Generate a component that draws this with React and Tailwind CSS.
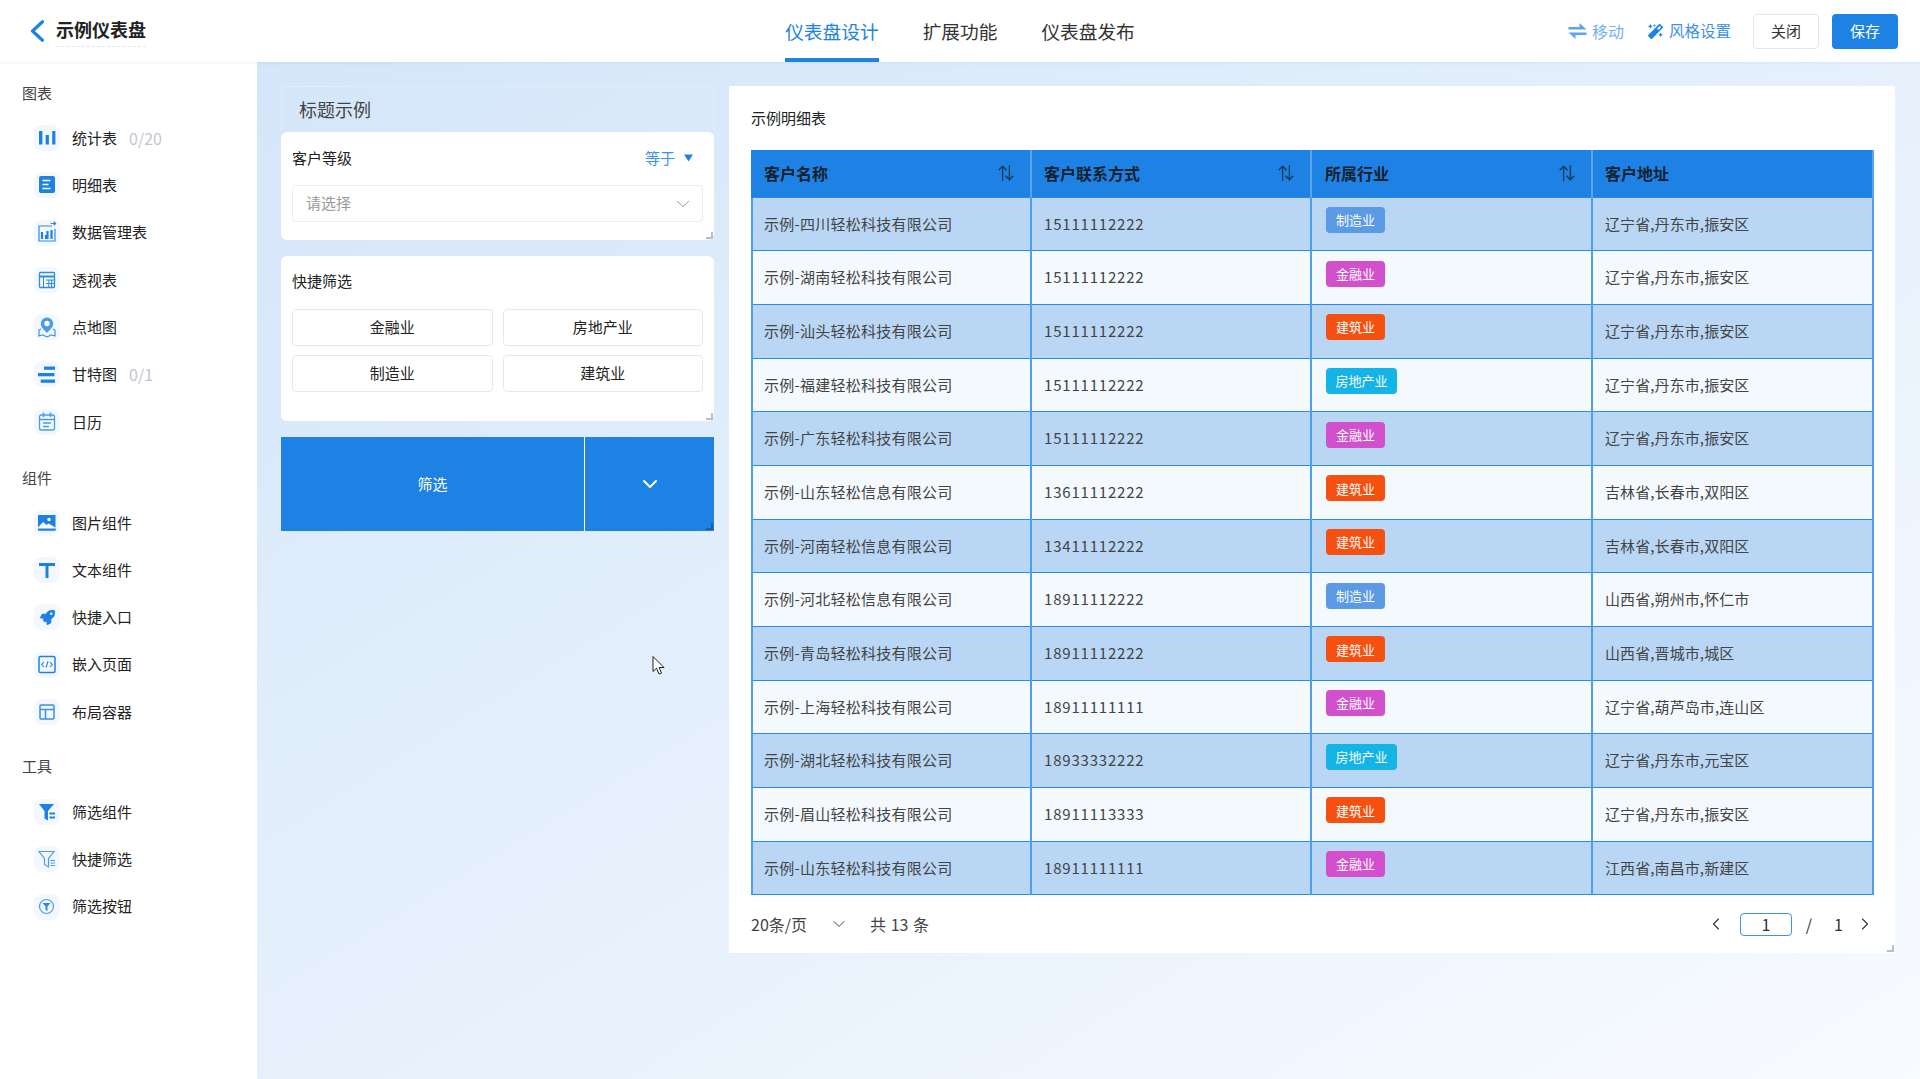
import { FaRocket, FaMagic } from 'react-icons/fa'
import { ChevronDown, ChevronLeft, ChevronRight } from 'lucide-react'

const FONT = { fontFamily: '"Noto Sans CJK SC", "Noto Sans", sans-serif' }

// sidebar icons, all on a 26 box
const icons = {
  bars: (
    <svg viewBox="0 0 26 26" className="w-[26px] h-[26px]" fill="#1e82e4">
      <rect x="5" y="6" width="3.4" height="13.5" />
      <rect x="11.6" y="10" width="3.3" height="9.5" />
      <rect x="18.2" y="6" width="3.2" height="13.5" />
    </svg>
  ),
  detail: (
    <svg viewBox="0 0 26 26" className="w-[26px] h-[26px]">
      <rect x="5" y="4" width="16" height="17" rx="2" fill="#1e82e4" />
      <path d="M8.5 8.5h8M8.5 12.5h6M8.5 16.5h8" stroke="#fff" strokeWidth="1.4" />
    </svg>
  ),
  manage: (
    <svg viewBox="0 0 26 26" className="w-[26px] h-[26px]" fill="none" stroke="#2f8ae6" strokeWidth="1.2">
      <path d="M18 6H5v15h16V9" />
      <path d="M16.5 3.5H21.5M19.8 1.8l1.8 1.7-1.8 1.7" />
      <path d="M8 12v7M12 15v4M13.5 11v8M17.5 10v9" strokeWidth="2.2" stroke="#1e82e4" />
    </svg>
  ),
  pivot: (
    <svg viewBox="0 0 26 26" className="w-[26px] h-[26px]" fill="none" stroke="#2f8ae6" strokeWidth="1.3">
      <rect x="5.5" y="5.5" width="15" height="15" rx="1" />
      <path d="M5.5 9.5h15" strokeWidth="2" />
      <path d="M9.5 9.5v11M12 13h8.5M12 16.5h8.5M14.8 13v7.5M17.6 13v7.5" strokeWidth="1" />
    </svg>
  ),
  map: (
    <svg viewBox="0 0 26 26" className="w-[26px] h-[26px]" fill="none" stroke="#2f8ae6">
      <path d="M13 3.5a6.2 6.2 0 0 0-6.2 6.2c0 3.6 3.4 6.4 6.2 9 2.8-2.6 6.2-5.4 6.2-9A6.2 6.2 0 0 0 13 3.5Z" fill="#4a9bea" stroke="none" />
      <circle cx="13" cy="9.5" r="2.7" fill="#fff" stroke="none" />
      <path d="M7 15l-2 1v6l3.5-1.2L13 23l4.5-2.2L21 22v-6l-2-1" strokeWidth="1.1" />
    </svg>
  ),
  gantt: (
    <svg viewBox="0 0 26 26" className="w-[26px] h-[26px]" fill="#1e82e4">
      <rect x="10" y="5.5" width="11" height="3.3" />
      <rect x="4" y="12" width="16.5" height="3.3" />
      <rect x="6.7" y="18.5" width="14.3" height="3.3" />
    </svg>
  ),
  calendar: (
    <svg viewBox="0 0 26 26" className="w-[26px] h-[26px]" fill="none" stroke="#4a9bea" strokeWidth="1.3">
      <rect x="5.5" y="6" width="15" height="15" rx="2" />
      <path d="M9.5 3.5v4.5M16.5 3.5v4.5" strokeWidth="1.6" />
      <path d="M5.5 10.5h15M9 14h8M9 17.5h6" />
    </svg>
  ),
  image: (
    <svg viewBox="0 0 26 26" className="w-[26px] h-[26px]">
      <rect x="4" y="5" width="17.5" height="15.5" fill="#1e82e4" />
      <circle cx="15" cy="9.5" r="1.7" fill="#fff" />
      <path d="M4 17.5l5-5.5 3.5 3 2-1.5 7 4v1.5H4Z" fill="#fff" />
      <rect x="4" y="18.5" width="17.5" height="2" fill="#1e82e4" />
    </svg>
  ),
  text: (
    <svg viewBox="0 0 26 26" className="w-[26px] h-[26px]" fill="#1e82e4">
      <path d="M5 6h16v3h-6.5v12h-3V9H5Z" />
    </svg>
  ),
  rocket: (
    <div className="w-[26px] h-[26px] flex items-center justify-center">
      <FaRocket className="text-[#1e82e4] text-[15px]" />
    </div>
  ),
  embed: (
    <svg viewBox="0 0 26 26" className="w-[26px] h-[26px]" fill="none" stroke="#1e82e4">
      <rect x="5" y="4.5" width="16" height="16" rx="1.5" strokeWidth="1.5" />
      <path d="M10 10l-2.3 2.5 2.3 2.5M16 10l2.3 2.5-2.3 2.5M14 9.5l-2 6" strokeWidth="1.1" />
    </svg>
  ),
  layout: (
    <svg viewBox="0 0 26 26" className="w-[26px] h-[26px]" fill="none" stroke="#3a8fe8" strokeWidth="1.5">
      <rect x="6" y="6" width="14" height="14" rx="1" />
      <path d="M6 10.5h14M11.5 10.5V20" />
    </svg>
  ),
  filter: (
    <svg viewBox="0 0 26 26" className="w-[26px] h-[26px]" fill="#1e82e4">
      <path d="M5 5h15l-6 7v9.5l-3.5-2V12Z" />
      <rect x="15.5" y="13.5" width="5.5" height="2" />
      <rect x="15.5" y="17.5" width="5.5" height="2" />
    </svg>
  ),
  quick: (
    <svg viewBox="0 0 26 26" className="w-[26px] h-[26px]" fill="none" stroke="#4a9bea" strokeWidth="1.2">
      <path d="M5 5.5h15l-5.5 7v8.5l-4-2.5v-6Z" />
      <path d="M16.5 14.5h4.500M16.5 17h4.500M16.5 19.5h4.500" />
    </svg>
  ),
  button: (
    <svg viewBox="0 0 26 26" className="w-[26px] h-[26px]">
      <circle cx="12.5" cy="12.5" r="7" fill="none" stroke="#4a9bea" strokeWidth="1.2" />
      <path d="M8.5 9h8l-3 3.5V17l-2-1v-3.5Z" fill="#2f8ae6" />
    </svg>
  ),
}

const groups = [
  {
    title: '图表',
    gap: 'mb-[33px]',
    head: 'mb-[22px]',
    items: [
      ['bars', '统计表', '0/20'],
      ['detail', '明细表'],
      ['manage', '数据管理表'],
      ['pivot', '透视表'],
      ['map', '点地图'],
      ['gantt', '甘特图', '0/1'],
      ['calendar', '日历'],
    ],
  },
  {
    title: '组件',
    gap: 'mb-[31px]',
    head: 'mb-[22px]',
    items: [
      ['image', '图片组件'],
      ['text', '文本组件'],
      ['rocket', '快捷入口'],
      ['embed', '嵌入页面'],
      ['layout', '布局容器'],
    ],
  },
  {
    title: '工具',
    gap: 'mb-[33px]',
    head: 'mb-[23px]',
    items: [
      ['filter', '筛选组件'],
      ['quick', '快捷筛选'],
      ['button', '筛选按钮'],
    ],
  },
]

const TAG = {
  制造业: 'bg-[#5c9ae6] w-[59px]',
  金融业: 'bg-[#d350cc] w-[59px]',
  建筑业: 'bg-[#f5500f] w-[59px]',
  房地产业: 'bg-[#14b4e6] w-[71px]',
}

const rows = [
  ['示例-四川轻松科技有限公司', '15111112222', '制造业', '辽宁省,丹东市,振安区'],
  ['示例-湖南轻松科技有限公司', '15111112222', '金融业', '辽宁省,丹东市,振安区'],
  ['示例-汕头轻松科技有限公司', '15111112222', '建筑业', '辽宁省,丹东市,振安区'],
  ['示例-福建轻松科技有限公司', '15111112222', '房地产业', '辽宁省,丹东市,振安区'],
  ['示例-广东轻松科技有限公司', '15111112222', '金融业', '辽宁省,丹东市,振安区'],
  ['示例-山东轻松信息有限公司', '13611112222', '建筑业', '吉林省,长春市,双阳区'],
  ['示例-河南轻松信息有限公司', '13411112222', '建筑业', '吉林省,长春市,双阳区'],
  ['示例-河北轻松信息有限公司', '18911112222', '制造业', '山西省,朔州市,怀仁市'],
  ['示例-青岛轻松科技有限公司', '18911112222', '建筑业', '山西省,晋城市,城区'],
  ['示例-上海轻松科技有限公司', '18911111111', '金融业', '辽宁省,葫芦岛市,连山区'],
  ['示例-湖北轻松科技有限公司', '18933332222', '房地产业', '辽宁省,丹东市,元宝区'],
  ['示例-眉山轻松科技有限公司', '18911113333', '建筑业', '辽宁省,丹东市,振安区'],
  ['示例-山东轻松科技有限公司', '18911111111', '金融业', '江西省,南昌市,新建区'],
]

const HEAD_PAD = ['pl-[11px] pr-3', 'px-3', 'pl-[13px] pr-3', 'px-3']

function SortIcon() {
  return (
    <svg viewBox="0 0 16 16" className="w-[18px] h-[18px] mr-[3px]" fill="none" stroke="#12395f" strokeWidth="1.2">
      <path d="M5 15V2M1.5 5.5 5 2l3.5 3.5" />
      <path d="M11 1v13M7.5 10.5 11 14l3.5-3.5" />
    </svg>
  )
}

// little grey drag handle in the bottom right of each widget
function Corner({ color = 'border-[#b9bec6]' }) {
  return <div className={`absolute right-[1px] bottom-[1px] w-[7px] h-[7px] border-r-2 border-b-2 ${color}`} />
}

function Sidebar() {
  return (
    <aside className="w-[257px] shrink-0 bg-white pl-[22px] pt-[21px]">
      {groups.map((g) => (
        <div key={g.title} className={g.gap}>
          <div className={`text-[15px] leading-5 text-[#444] ${g.head}`}>{g.title}</div>
          <div className="flex flex-col gap-[21.3px] pl-3">
            {g.items.map(([icon, label, count]) => (
              <div key={label} className="flex items-center h-[26px]">
                <div className="w-[26px] h-[26px] rounded-lg bg-[#f3f8fe]">{icons[icon]}</div>
                <span className="ml-3 text-[15px] text-[#222]">{label}</span>
                {count && <span className="ml-3 text-[16px] text-[#c4c4d4]">{count}</span>}
              </div>
            ))}
          </div>
        </div>
      ))}
    </aside>
  )
}

function Header() {
  return (
    <header className="h-[62px] shrink-0 bg-white flex items-center relative z-10 shadow-[0_1px_3px_rgba(120,160,210,0.15)]">
      <div className="w-[640px] flex items-center pl-[30px]">
        <svg viewBox="0 0 14 22" className="w-[14px] h-[22px]" fill="none" stroke="#1e82e4" strokeWidth="3.2" strokeLinecap="round" strokeLinejoin="round">
          <path d="M12.5 1.8 2.5 11l10 9.2" />
        </svg>
        <span className="ml-3 text-[18px] font-bold text-[#222] pb-[3px] border-b border-dashed border-[#e6e6e6]">示例仪表盘</span>
      </div>
      <nav className="flex-1 flex justify-center gap-[44px] h-full">
        <div className="h-full flex items-center text-[18.7px] text-[#1e82e4] border-b-4 border-[#1e82e4] pt-1">仪表盘设计</div>
        <div className="h-full flex items-center text-[18.7px] text-[#333]">扩展功能</div>
        <div className="h-full flex items-center text-[18.7px] text-[#333]">仪表盘发布</div>
      </nav>
      <div className="w-[640px] flex items-center justify-end pr-[22px]">
        <svg viewBox="0 0 18 16" className="w-[19px] h-4" fill="#5ba4ec">
          <path d="M11 0l7 6.5H0V4h11ZM7 16 0 9.5h18V12H7Z" />
        </svg>
        <span className="ml-[5px] text-[16px] text-[#76b2ef]">移动</span>
        <FaMagic className="ml-[24px] text-[15px] text-[#1e82e4]" />
        <span className="ml-[6px] text-[15.5px] text-[#3d92e8]">风格设置</span>
        <button className="ml-[22px] w-[66px] h-[35px] rounded-[4px] border border-[#e1e6ef] bg-white text-[15px] text-[#333]">关闭</button>
        <button className="ml-[13px] w-[66px] h-[35px] rounded-[4px] bg-[#1e82e4] text-[15px] text-white">保存</button>
      </div>
    </header>
  )
}

function FilterColumn() {
  return (
    <div className="w-[433px] shrink-0">
      <div className="h-[45px] rounded-t-md border border-b-0 border-[#e3edf8] flex items-center pl-[17px] text-[18px] text-[#444]">标题示例</div>
      <div className="relative mt-[1px] h-[108px] bg-white rounded-md px-[11px] pt-[14px]">
        <div className="flex justify-between items-center h-6 text-[15px] text-[#222]">
          <span>客户等级</span>
          <span className="flex items-center text-[#3d92e8] pr-[10px]">
            等于
            <svg viewBox="0 0 10 8" className="w-[9px] h-[8px] ml-[9px]" fill="#1e82e4"><path d="M0 0h10L5 8Z" /></svg>
          </span>
        </div>
        <div className="mt-[15px] h-[37px] rounded border border-[#e9ecf1] flex items-center justify-between pl-[13px] pr-[8px] text-[15px] text-[#999]">
          请选择
          <ChevronDown className="w-[22px] h-[22px] text-[#8a8f98]" strokeWidth={1} />
        </div>
        <Corner />
      </div>
      <div className="relative mt-4 h-[165px] bg-white rounded-md px-[11px] pt-[13px]">
        <div className="h-6 flex items-center text-[15px] text-[#222]">快捷筛选</div>
        <div className="mt-4 grid grid-cols-2 gap-x-[10px] gap-y-[9px]">
          {['金融业', '房地产业', '制造业', '建筑业'].map((t) => (
            <div key={t} className="h-[37px] pb-px rounded border border-[#e6e8ef] flex items-center justify-center text-[15px] text-[#222]">{t}</div>
          ))}
        </div>
        <Corner />
      </div>
      <div className="relative mt-4 h-[94px] bg-[#1e82e4] flex text-white text-[15px]">
        <div className="w-[304px] flex items-center justify-center border-r border-white">筛选</div>
        <div className="flex-1 flex items-center justify-center"><ChevronDown className="w-6 h-6" strokeWidth={2} /></div>
        <Corner color="border-[#1b5fae]" />
      </div>
    </div>
  )
}

function DetailTable() {
  return (
    <div className="relative w-[1166px] h-[867px] bg-white pl-[22px] pr-[23px] pt-[20px]">
      <div className="h-6 flex items-center text-[15px] text-[#222]">示例明细表</div>
      <table className="mt-[20px] w-[1121px] table-fixed border-collapse">
        <colgroup>
          <col className="w-[279px]" />
          <col className="w-[280px]" />
          <col className="w-[281px]" />
          <col className="w-[281px]" />
        </colgroup>
        <thead>
          <tr className="h-[47px] bg-[#1e82e4] text-left text-[16px] font-bold text-[#14202c]">
            {['客户名称', '客户联系方式', '所属行业', '客户地址'].map((h, i) => (
              <th key={h} className={`${HEAD_PAD[i]} border-x-2 border-[#5ba3ea] first:border-l-[#1e82e4]`}>
                <div className="flex items-center justify-between">
                  <span>{h}</span>
                  {i < 3 && <SortIcon />}
                </div>
              </th>
            ))}
          </tr>
        </thead>
        <tbody className="text-[15px] text-[#444]">
          {rows.map((r, i) => (
            <tr key={i} className={`h-[53.7px] border-y border-[#2a8ae8] ${i % 2 === 0 ? 'bg-[#b9d6f5]' : 'bg-[#f4f9fe]'}`}>
              <td className="pl-[11px] pr-3 border-x-2 border-[#4f9eea] tracking-[0.25px]">{r[0]}</td>
              <td className="px-3 border-x-2 border-[#4f9eea] tracking-[0.8px]">{r[1]}</td>
              <td className="pl-[14px] pr-3 border-x-2 border-[#4f9eea]">
                <div className={`h-[26px] mb-2 rounded-[4px] flex items-center justify-center text-[13px] text-white ${TAG[r[2]]}`}>{r[2]}</div>
              </td>
              <td className="px-3 border-x-2 border-[#4f9eea] tracking-[0.1px]">{r[3]}</td>
            </tr>
          ))}
        </tbody>
      </table>
      <div className="mt-[17px] h-6 flex items-center text-[16px] text-[#444]">
        <span>20条/页</span>
        <ChevronDown className="ml-[22px] w-5 h-5" strokeWidth={1.2} />
        <span className="ml-[21px] [word-spacing:1px]">共 13 条</span>
        <div className="ml-auto flex items-center text-[#333] -mr-[3px]">
          <ChevronLeft className="w-5 h-5" strokeWidth={1.3} />
          <div className="ml-[14px] w-[52px] h-[23px] rounded border border-[#3d92e8] flex items-center justify-center">1</div>
          <span className="ml-[14px]">/</span>
          <span className="ml-[22px]">1</span>
          <ChevronRight className="ml-3 w-5 h-5" strokeWidth={1.3} />
        </div>
      </div>
      <Corner />
    </div>
  )
}

export default function App() {
  return (
    <div style={FONT} className="relative w-[1920px] h-[1079px] overflow-hidden flex flex-col bg-white">
      <Header />
      <div className="flex-1 flex min-h-0">
        <Sidebar />
        <main className="flex-1 flex gap-[15px] pl-[24px] pt-[24px] bg-linear-to-br from-[#d4e6f9] to-[#f8fbff]">
          <FilterColumn />
          <DetailTable />
        </main>
      </div>
      {/* mouse pointer caught in the screenshot */}
      <svg viewBox="0 0 14 20" className="absolute left-[652px] top-[655px] w-[14px] h-[21px]" fill="#fff" stroke="#222" strokeWidth="1">
        <path d="M1 1v15l3.5-3.3L7 18.5l2.5-1-2.4-5.5H12Z" />
      </svg>
    </div>
  )
}
